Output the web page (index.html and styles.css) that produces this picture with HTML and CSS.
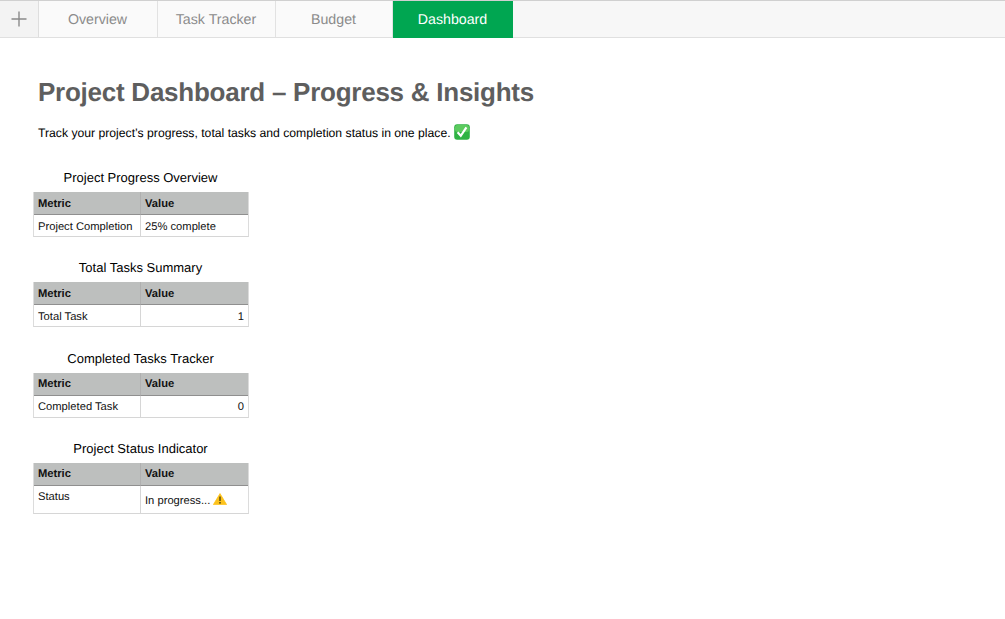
FILE: index.html
```html
<!DOCTYPE html>
<html lang="en">
<head>
    <meta charset="UTF-8">
    <meta name="viewport" content="width=device-width, initial-scale=1.0">
    <title>Project Dashboard</title>
    <link rel="stylesheet" href="styles.css">
</head>

<body>
    <nav class="tab-bar">
        <div class="tab-add">
            <svg width="16" height="16" viewBox="0 0 16 16"><path d="M8 0.5V15.5M0.5 8H15.5" stroke="#8a8a8a" stroke-width="1.4" fill="none"/></svg>
        </div>
        <div class="tab tab-overview">Overview</div>
        <div class="tab tab-tracker">Task Tracker</div>
        <div class="tab tab-budget">Budget</div>
        <div class="tab tab-active">Dashboard</div>
    </nav>

    <main class="sheet">
        <h1 class="sheet-title">Project Dashboard – Progress &amp; Insights</h1>
        <p class="sheet-intro">Track your project’s progress, total tasks and completion status in one place.
            <svg class="emoji-check" width="16" height="16" viewBox="0 0 16 16"><rect x="0.2" y="0.2" width="15.6" height="15.6" rx="3" fill="#2fb344"/><rect x="1" y="1" width="14" height="7" rx="2.5" fill="#5ccb5f"/><path d="M3.6 8.2L6.8 11.8L12.4 3.4" stroke="#fff" stroke-width="2.2" fill="none"/></svg>
        </p>

        <section class="block">
            <h2 class="block-title">Project Progress Overview</h2>
            <table class="data">
                <thead><tr><th>Metric</th><th>Value</th></tr></thead>
                <tbody><tr><td>Project Completion</td><td>25% complete</td></tr></tbody>
            </table>
        </section>

        <section class="block">
            <h2 class="block-title">Total Tasks Summary</h2>
            <table class="data">
                <thead><tr><th>Metric</th><th>Value</th></tr></thead>
                <tbody><tr><td>Total Task</td><td class="num">1</td></tr></tbody>
            </table>
        </section>

        <section class="block">
            <h2 class="block-title">Completed Tasks Tracker</h2>
            <table class="data">
                <thead><tr><th>Metric</th><th>Value</th></tr></thead>
                <tbody><tr><td>Completed Task</td><td class="num">0</td></tr></tbody>
            </table>
        </section>

        <section class="block">
            <h2 class="block-title">Project Status Indicator</h2>
            <table class="data">
                <thead><tr><th>Metric</th><th>Value</th></tr></thead>
                <tbody>
                    <tr class="row-tall">
                        <td class="top">Status</td>
                        <td class="low">In progress...
                            <svg class="emoji-warn" width="14" height="12" viewBox="0 0 14 12"><path d="M7 0.6L13.6 11.6H0.4Z" fill="#fcc21b" stroke="#fcc21b" stroke-width="0.8" stroke-linejoin="round"/><path d="M7 3.6V8" stroke="#5a4a10" stroke-width="1.5"/><rect x="6.2" y="9" width="1.6" height="1.6" fill="#5a4a10"/></svg>
                        </td>
                    </tr>
                </tbody>
            </table>
        </section>
    </main>
</body>

</html>
```

FILE: styles.css
```css
html,
body {
    margin: 0;
    background: #fff;
    font-family: "Liberation Sans", Arial, sans-serif;
    color: #000;
    text-rendering: geometricPrecision;
}

/* Tabs */
.tab-bar {
    display: flex;
    height: 36px;
    background: #f7f7f7;
    border-top: 1px solid #d0d0d0;
    border-bottom: 1px solid #e0e0e0;
}

.tab-add {
    display: flex;
    align-items: center;
    justify-content: center;
    width: 38px;
    background: #f3f3f3;
    border-right: 1px solid #dedede;
}

.tab {
    display: flex;
    align-items: center;
    justify-content: center;
    box-sizing: border-box;
    padding: 1px 1px 0 0;
    font-size: 14.2px;
    color: #8b8b8b;
    border-right: 1px solid #e2e2e2;
    background: #fafafa;
}

.tab-overview { width: 119px; }
.tab-tracker { width: 118px; }
.tab-budget { width: 117px; }

.tab-active {
    width: 120px;
    margin-bottom: -1px;
    padding-bottom: 1px;
    background: #00a651;
    color: #fff;
    border-right: 0;
}

/* Sheet */
.sheet {
    padding: 0 0 0 33px;
}

.sheet-title {
    margin: 0;
    padding: 38px 0 0 5px;
    font-size: 26px;
    line-height: 32px;
    letter-spacing: -0.25px;
    font-weight: bold;
    color: #5e5e5e;
}

.sheet-intro {
    margin: 0;
    padding: 16px 0 0 5px;
    font-size: 12.2px;
    line-height: 18px;
    height: 19px;
}

.emoji-check {
    vertical-align: -3px;
}

.emoji-warn {
    vertical-align: -1px;
}

.block {
    width: 215px;
    margin-top: 22.3px;
}

.block:first-of-type {
    margin-top: 26px;
}

.block-title {
    margin: 0 0 5px;
    font-size: 13px;
    line-height: 18px;
    font-weight: normal;
    text-align: center;
}

/* Tables */
.data {
    width: 216px;
    table-layout: fixed;
    border-collapse: separate;
    border-spacing: 0;
    font-size: 11.2px;
    color: #111;
    border-left: 1px solid #dcdcdc;
    border-right: 1px solid #dcdcdc;
    border-bottom: 1px solid #d6d6d6;
}

.data th {
    height: 23px;
    padding: 1px 4px 0;
    text-align: left;
    font-weight: bold;
    background: #bdbfbe;
    border-bottom: 1px solid #8f8f8f;
    box-sizing: border-box;
}

.data td {
    height: 21px;
    padding: 2px 4px 0;
    box-sizing: border-box;
}

.data th:first-child,
.data td:first-child {
    width: 107px;
    border-right: 1px solid #d6d6d6;
}

.data th:first-child {
    border-right-color: #b0b0b0;
}

.data .num {
    text-align: right;
}

.row-tall td {
    height: 27px;
}

.data .top {
    vertical-align: top;
    padding-top: 5px;
}

.data .low {
    vertical-align: bottom;
    padding-bottom: 6px;
}
```
